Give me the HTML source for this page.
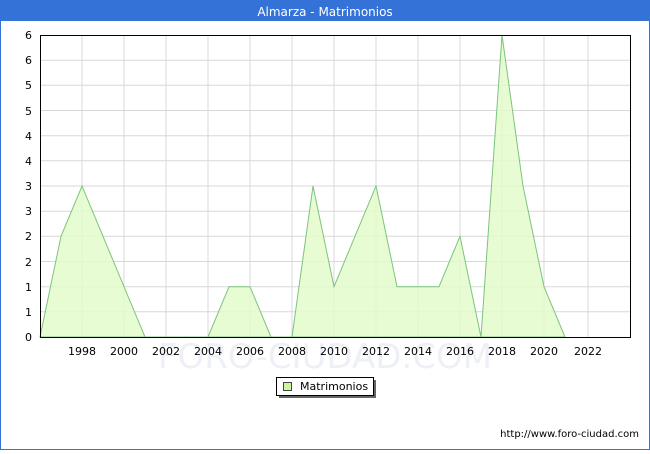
<!DOCTYPE html><html><head><style>body{margin:0;width:650px;height:450px;overflow:hidden;background:#fff;font-family:"DejaVu Sans","Liberation Sans",sans-serif}</style></head><body>
<svg width="650" height="450" xmlns="http://www.w3.org/2000/svg" font-family="DejaVu Sans, Liberation Sans, sans-serif">
<rect x="0.5" y="0.5" width="649" height="449" fill="#fff" stroke="#3572d8"/>
<rect x="0" y="0" width="650" height="21" fill="#3572d8"/>
<text x="325" y="16" font-size="12" fill="#fff" text-anchor="middle">Almarza - Matrimonios</text>
<g stroke="#d8d8d8" stroke-width="1">
<line x1="40" y1="60.2" x2="630" y2="60.2"/><line x1="40" y1="85.3" x2="630" y2="85.3"/><line x1="40" y1="110.5" x2="630" y2="110.5"/><line x1="40" y1="135.7" x2="630" y2="135.7"/><line x1="40" y1="160.8" x2="630" y2="160.8"/><line x1="40" y1="186" x2="630" y2="186"/><line x1="40" y1="211.2" x2="630" y2="211.2"/><line x1="40" y1="236.3" x2="630" y2="236.3"/><line x1="40" y1="261.5" x2="630" y2="261.5"/><line x1="40" y1="286.7" x2="630" y2="286.7"/><line x1="40" y1="311.8" x2="630" y2="311.8"/>
<line x1="82" y1="35" x2="82" y2="337"/><line x1="124" y1="35" x2="124" y2="337"/><line x1="166" y1="35" x2="166" y2="337"/><line x1="208" y1="35" x2="208" y2="337"/><line x1="250" y1="35" x2="250" y2="337"/><line x1="292" y1="35" x2="292" y2="337"/><line x1="334" y1="35" x2="334" y2="337"/><line x1="376" y1="35" x2="376" y2="337"/><line x1="418" y1="35" x2="418" y2="337"/><line x1="460" y1="35" x2="460" y2="337"/><line x1="502" y1="35" x2="502" y2="337"/><line x1="544" y1="35" x2="544" y2="337"/><line x1="588" y1="35" x2="588" y2="337"/>
</g>
<polygon fill="#e4fccc" fill-opacity="0.85" stroke="#7cc47c" stroke-width="1" points="40,337 61,236.3 82,186 103,236.3 124,286.7 145,337 208,337 229,286.7 250,286.7 271,337 292,337 313,186 334,286.7 355,236.3 376,186 397,286.7 418,286.7 439,286.7 460,236.3 481,337 502,35 523,186 544,286.7 565,337"/>
<text x="325" y="368" font-size="34" fill="#eef0f8" text-anchor="middle">FORO-CIUDAD.COM</text>
<rect x="40.5" y="35.5" width="590" height="302" fill="none" stroke="#000"/>
<g font-size="11" fill="#000" text-anchor="end">
<text x="32" y="341">0</text><text x="32" y="316">1</text><text x="32" y="291">1</text><text x="32" y="266">2</text><text x="32" y="240">2</text><text x="32" y="215">3</text><text x="32" y="190">3</text><text x="32" y="165">4</text><text x="32" y="140">4</text><text x="32" y="115">5</text><text x="32" y="89">5</text><text x="32" y="64">6</text><text x="32" y="39">6</text>
</g>
<g font-size="11" fill="#000" text-anchor="middle">
<text x="82" y="355">1998</text><text x="124" y="355">2000</text><text x="166" y="355">2002</text><text x="208" y="355">2004</text><text x="250" y="355">2006</text><text x="292" y="355">2008</text><text x="334" y="355">2010</text><text x="376" y="355">2012</text><text x="418" y="355">2014</text><text x="460" y="355">2016</text><text x="502" y="355">2018</text><text x="544" y="355">2020</text><text x="588" y="355">2022</text>
</g>
<rect x="279" y="380" width="97" height="18" fill="#666"/>
<rect x="276.5" y="377.5" width="97" height="18" fill="#fff" stroke="#000"/>
<rect x="283.5" y="382.5" width="8" height="8" fill="#ccf5a0" stroke="#444"/>
<text x="300" y="390" font-size="11" fill="#000">Matrimonios</text>
<text x="639" y="437" font-size="10" fill="#000" text-anchor="end">http://www.foro-ciudad.com</text>
</svg>
</body></html>
